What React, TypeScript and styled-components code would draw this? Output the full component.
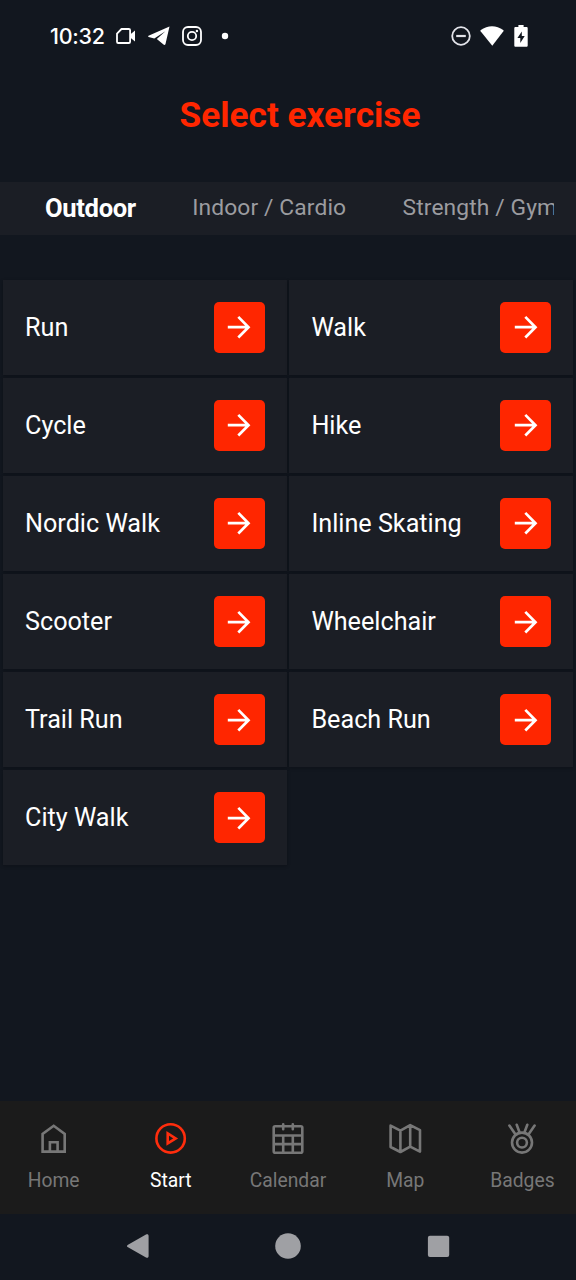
import React from 'react';
import styled, { createGlobalStyle } from 'styled-components';

const GlobalStyle = createGlobalStyle`
  * { box-sizing: border-box; }
  body { margin: 0; background: #12171f; }
`;

const Screen = styled.div`
  width: 576px;
  height: 1280px;
  display: flex;
  flex-direction: column;
  overflow: hidden;
  background: #12171f;
  color: #fff;
  font-family: Roboto, 'Liberation Sans', sans-serif;
`;

const StatusBar = styled.header`
  height: 72px;
  flex: none;
  display: flex;
  align-items: center;
  justify-content: space-between;
  padding: 0 48.5px 0 50px;
`;

const StatusGroup = styled.div<{ $gap: number }>`
  display: flex;
  align-items: center;
  gap: ${(p) => p.$gap}px;
  svg { display: block; }
`;

const Clock = styled.span`
  width: 54px;
  font: 500 21.5px/26px Inter, sans-serif;
  letter-spacing: -0.25px;
  white-space: nowrap;
`;

const Title = styled.h1`
  flex: none;
  height: 110px;
  margin: 0;
  padding: 22px 0 0 24px;
  text-align: center;
  color: #ff2600;
  font-size: 35.2px;
  line-height: 42px;
  font-weight: 700;
`;

const TabBar = styled.nav`
  flex: none;
  height: 53px;
  padding: 0 22px;
  background: #1b1e25;
`;

const TabScroller = styled.div`
  display: flex;
  height: 51px;
  align-items: center;
  overflow: hidden;
  gap: 56.3px;
  padding-left: 23px;
`;

const Tab = styled.span<{ $active?: boolean }>`
  flex: none;
  white-space: nowrap;
  line-height: 30px;
  font-size: ${(p) => (p.$active ? 25.6 : 22.8)}px;
  font-weight: ${(p) => (p.$active ? 700 : 400)};
  color: ${(p) => (p.$active ? '#fff' : '#9b9ca0')};
  letter-spacing: ${(p) => (p.$active ? -0.35 : 0.12)}px;
`;

const Grid = styled.main`
  flex: 1;
  display: grid;
  grid-template-columns: 1fr 1fr;
  grid-auto-rows: 95.3px;
  align-content: start;
  gap: 2.8px;
  padding: 44.6px 3px 0;
`;

const Tile = styled.div`
  display: flex;
  align-items: center;
  justify-content: space-between;
  padding: 0 22px;
  background: #1b1e25;
  box-shadow: 0 1px 3px rgba(5, 8, 14, 0.35);
  font-size: 25.2px;
  line-height: 30px;
  white-space: nowrap;
`;

const TileName = styled.span`
  padding-top: 1.4px;
`;

const GoButton = styled.button`
  width: 51px;
  height: 51px;
  flex: none;
  display: grid;
  place-items: center;
  padding: 0;
  border: 0;
  border-radius: 5px;
  background: #ff2600;
`;

const BottomNav = styled.nav`
  flex: none;
  height: 113px;
  display: flex;
  margin: 0 -5px;
  background: #1b1b1b;
`;

const NavItem = styled.div<{ $active?: boolean }>`
  flex: 1 1 0;
  display: flex;
  flex-direction: column;
  align-items: center;
  padding-top: 20px;
  gap: 14px;
  color: ${(p) => (p.$active ? '#ff2d0d' : '#777')};
  svg { display: block; }
`;

const NavLabel = styled.span<{ $active?: boolean }>`
  font-size: 19.3px;
  line-height: 24px;
  color: ${(p) => (p.$active ? '#fff' : '#777')};
`;

const SystemBar = styled.footer`
  flex: none;
  height: 66px;
  display: flex;
  align-items: center;
  justify-content: space-between;
  padding: 0 126px 2px;
`;

const exercises = [
  'Run', 'Walk', 'Cycle', 'Hike', 'Nordic Walk', 'Inline Skating',
  'Scooter', 'Wheelchair', 'Trail Run', 'Beach Run', 'City Walk',
];

const NavIcon = ({ children }: { children: React.ReactNode }) => (
  <svg width="34" height="34" viewBox="0 0 34 34" fill="none" stroke="currentColor" strokeWidth="2.6">
    {children}
  </svg>
);

const navItems = [
  {
    label: 'Home',
    icon: <path d="M5.6 30.6V13L16.700 4.800l11 8.200V30.600zM12.900 30.200V21.200h7.700v9" />,
  },
  {
    label: 'Start',
    active: true,
    icon: (
      <>
        <circle cx="16.600" cy="17.400" r="14.200" />
        <path d="M13.700 12.400v10l8-5z" />
      </>
    ),
  },
  {
    label: 'Calendar',
    icon: (
      <>
        <rect x="2.700" y="5.200" width="28.600" height="26.500" rx="1.500" />
        <path d="M2.700 14.500h28.600M2.700 23.100h28.600M12.200 14.500v17.200M21.800 14.500v17.200" />
        <path strokeLinecap="round" d="M12.200 3.200v5M21.800 3.200v5" />
      </>
    ),
  },
  {
    label: 'Map',
    icon: (
      <path
        strokeLinejoin="round"
        d="M2.600 4.600l9.800 5 9.800-5.500 9.800 5v21.500l-9.800-5-9.800 5.400-9.800-5zM12.400 9.600v21.400M22.200 4.100v21.500"
      />
    ),
  },
  {
    label: 'Badges',
    icon: (
      <>
        <circle cx="17" cy="21.600" r="10" />
        <circle cx="17" cy="21.600" r="4.900" />
        <path strokeLinecap="round" d="M10.200 12.900L4.400 4.600M14.400 11L11.700 3.800M19.600 11l2.700-7.200M23.800 12.900L29.600 4.600" />
      </>
    ),
  },
];

export default function App() {
  return (
    <>
      <GlobalStyle />
      <Screen>
        <StatusBar>
          <StatusGroup $gap={12}>
            <Clock>10:32</Clock>
            <svg width="20" height="16" viewBox="0 0 20 16" fill="none" stroke="#fff" strokeWidth="1.8">
              <path d="M5.500 1h7.300c.8 0 1.300.5 1.300 1.300v11.400c0 .8-.5 1.300-1.300 1.300H2.200C1.400 15 1 14.500 1 13.700V5.600z" strokeLinejoin="round" />
              <path d="M14.500 6.200L19 2.500v11l-4.500-3.700z" fill="#fff" stroke="none" />
            </svg>
            <svg width="22" height="20" viewBox="0 0 22 20">
              <path d="M21.500.6L.5 9.700c-.6.3-.5 1 .1 1.200l5.700 1.700L17.400 5.200 8.800 13l6.700 5.600c.9.6 1.700.4 2-.7z" fill="#fff" />
            </svg>
            <svg width="20" height="20" viewBox="0 0 20 20" fill="none" stroke="#fff" strokeWidth="1.800">
              <rect x="1" y="1" width="18" height="18" rx="5" />
              <circle cx="10" cy="10" r="4.200" />
              <circle cx="14.900" cy="5" r="1.200" fill="#fff" stroke="none" />
            </svg>
            <svg width="24" height="8" viewBox="0 0 24 8">
              <circle cx="11" cy="4" r="3.200" fill="#fff" />
            </svg>
          </StatusGroup>
          <StatusGroup $gap={8.500}>
            <svg width="20" height="20" viewBox="0 0 20 20" fill="none" stroke="#e3e4ea" strokeWidth="1.800">
              <circle cx="10" cy="10" r="8.800" />
              <path d="M5.200 10h9.600" strokeWidth="2.200" />
            </svg>
            <svg width="26" height="21" viewBox="0 0 26 21">
              <path d="M13.300 19.700L1.600 5.200Q1.200 4.600 1.800 4.100C8.500-1.100 17.500-1.100 24.200 4.100q.6.500.2 1.100z" fill="#fff" />
            </svg>
            <svg width="14" height="22" viewBox="0 0 14 22">
              <path d="M4.400 0h5.200v2h2.800c.8 0 1.300.5 1.300 1.300v17.200c0 .8-.5 1.300-1.300 1.300H1.600c-.8 0-1.300-.5-1.300-1.300V3.300C.3 2.500.8 2 1.600 2h2.800z" fill="#fff" />
              <path d="M7.800 6.500L3.400 13h2.900v5L10.700 11H7.800z" fill="#12171f" />
            </svg>
          </StatusGroup>
        </StatusBar>
        <Title>Select exercise</Title>
        <TabBar>
          <TabScroller>
            <Tab $active>Outdoor</Tab>
            <Tab>Indoor / Cardio</Tab>
            <Tab>Strength / Gym</Tab>
          </TabScroller>
        </TabBar>
        <Grid>
          {exercises.map((name) => (
            <Tile key={name}>
              <TileName>{name}</TileName>
              <GoButton aria-label={name}>
                <svg width="24" height="24" viewBox="0 0 24 24" fill="none" stroke="#fff" strokeWidth="2.700">
                  <path d="M.8 12.200h21M11.300 1.900L21.500 12.200 11.300 22.500" />
                </svg>
              </GoButton>
            </Tile>
          ))}
        </Grid>
        <BottomNav>
          {navItems.map((item) => (
            <NavItem key={item.label} $active={item.active}>
              <NavIcon>{item.icon}</NavIcon>
              <NavLabel $active={item.active}>{item.label}</NavLabel>
            </NavItem>
          ))}
        </BottomNav>
        <SystemBar>
          <svg width="24" height="26" viewBox="0 0 24 26" fill="#9fa0a4">
            <path d="M2 11.700L20 1.600c1.500-.8 2.600-.2 2.600 1.400v20c0 1.600-1.100 2.200-2.600 1.400L2 14.300c-1.400-.8-1.400-1.800 0-2.600z" />
          </svg>
          <svg width="26" height="26" viewBox="0 0 26 26" fill="#9fa0a4">
            <circle cx="13" cy="13" r="12.800" />
          </svg>
          <svg width="24" height="26" viewBox="0 0 24 26" fill="#9fa0a4">
            <rect x="1.900" y="2.700" width="21.300" height="21.300" rx="2" />
          </svg>
        </SystemBar>
      </Screen>
    </>
  );
}
